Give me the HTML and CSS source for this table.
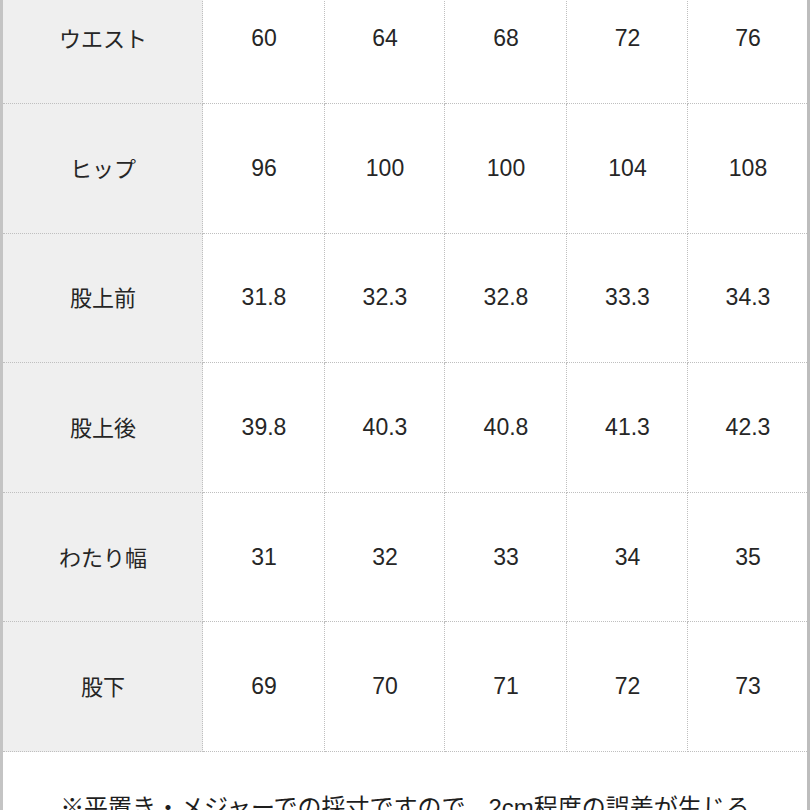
FILE: index.html
```html
<!DOCTYPE html>
<html lang="ja">
<head>
<meta charset="utf-8">
<title>サイズ表</title>
<link rel="stylesheet" href="styles.css">
</head>
<body>
<div class="sheet">
  <div class="size-table">
    <div class="cell label">ウエスト</div>
    <div class="cell">60</div><div class="cell">64</div><div class="cell">68</div><div class="cell">72</div><div class="cell last">76</div>

    <div class="cell label">ヒップ</div>
    <div class="cell">96</div><div class="cell">100</div><div class="cell">100</div><div class="cell">104</div><div class="cell last">108</div>

    <div class="cell label">股上前</div>
    <div class="cell">31.8</div><div class="cell">32.3</div><div class="cell">32.8</div><div class="cell">33.3</div><div class="cell last">34.3</div>

    <div class="cell label">股上後</div>
    <div class="cell">39.8</div><div class="cell">40.3</div><div class="cell">40.8</div><div class="cell">41.3</div><div class="cell last">42.3</div>

    <div class="cell label">わたり幅</div>
    <div class="cell">31</div><div class="cell">32</div><div class="cell">33</div><div class="cell">34</div><div class="cell last">35</div>

    <div class="cell label">股下</div>
    <div class="cell">69</div><div class="cell">70</div><div class="cell">71</div><div class="cell">72</div><div class="cell last">73</div>
  </div>
  <p class="note">※平置き・メジャーでの採寸ですので、2cm程度の誤差が生じる</p>
</div>
</body>
</html>
```

FILE: styles.css
```css
html, body {
  margin: 0;
  padding: 0;
  background: #ffffff;
}

body {
  width: 810px;
  height: 810px;
  overflow: hidden;
  font-family: "Liberation Sans", "Noto Sans CJK JP", Arial, sans-serif;
  color: #262626;
}

.sheet {
  box-sizing: border-box;
  width: 810px;
  min-height: 900px;
  border-left: 3px solid #c4c4c4;
  border-right: 3px solid #bdbdbd;
  background: #ffffff;
}

.size-table {
  display: grid;
  grid-template-columns: 200px 122px 120px 122px 121px 119px;
  grid-auto-rows: 129.6px;
  margin-top: -25.6px;
}

.cell {
  box-sizing: border-box;
  display: flex;
  align-items: center;
  justify-content: center;
  font-size: 23px;
  border-right: 1px dotted #bfbfbf;
  border-bottom: 1px dotted #bfbfbf;
  padding-left: 1px;
}

.cell.label {
  background: #efefef;
  font-size: 22px;
  padding-bottom: 3px;
}

.cell.last {
  border-right: none;
}

.note {
  margin: 0;
  padding-top: 38px;
  text-align: center;
  font-size: 24px;
  line-height: 1.5;
  color: #1e1e1e;
  white-space: nowrap;
}
```
